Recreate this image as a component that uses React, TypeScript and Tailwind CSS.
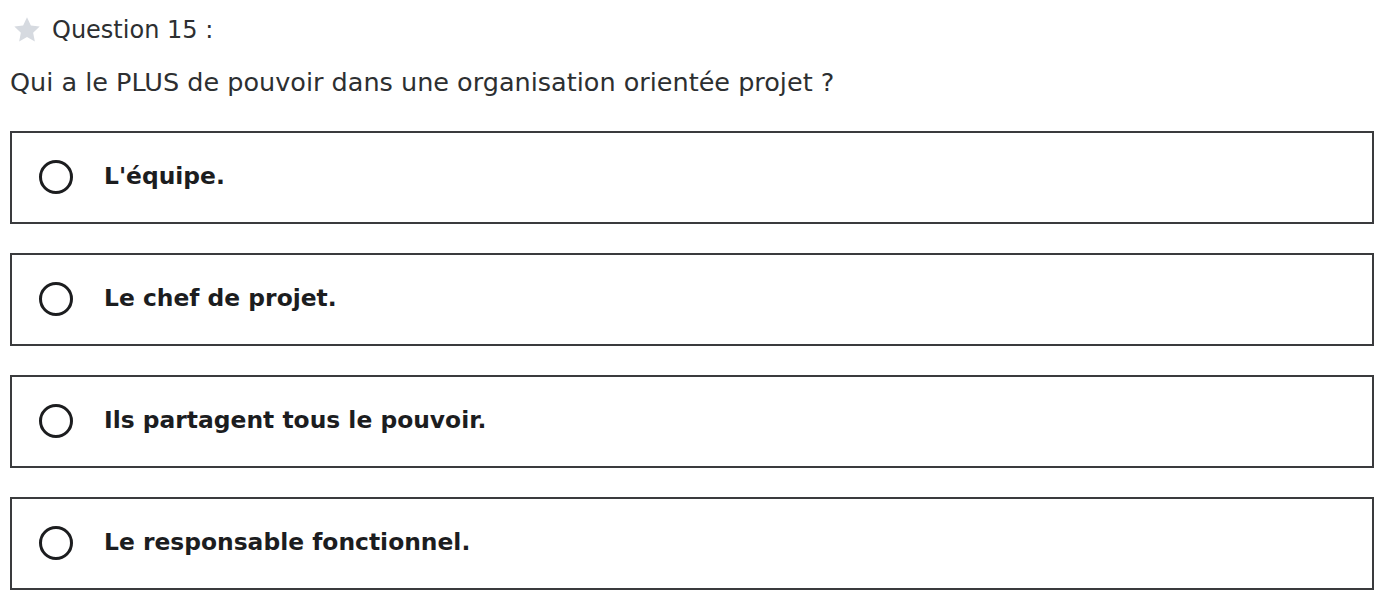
const options = [
  "L'équipe.",
  "Le chef de projet.",
  "Ils partagent tous le pouvoir.",
  "Le responsable fonctionnel.",
];

function Star() {
  return (
    <svg width="32" height="32" viewBox="0 0 24 24" className="shrink-0">
      <path
        d="M12 2.5l2.9 6.1 6.6.8-4.9 4.6 1.3 6.6L12 17.3l-5.9 3.3 1.3-6.6-4.9-4.6 6.6-.8z"
        fill="#d6dae0"
      />
    </svg>
  );
}

export default function App() {
  return (
    <div
      className="w-[1390px] h-[602px] bg-white text-[#2d2f31] overflow-hidden"
      style={{ fontFamily: "'DejaVu Sans', 'Noto Sans', sans-serif" }}
    >
      <div className="flex items-center gap-[9px] pl-[11px] pt-[14px] h-[46px]">
        <Star />
        <span className="text-[24px] leading-none">Question 15 :</span>
      </div>
      <p className="pl-[10px] mt-[24px] text-[25.5px] leading-none">
        Qui a le PLUS de pouvoir dans une organisation orientée projet ?
      </p>
      <div className="flex flex-col gap-[29px] ml-[10px] w-[1364px] mt-[35px]">
        {options.map((o, i) => (
          <div
            key={i}
            className="h-[93px] border-2 border-[#3a3b3d] flex items-center pl-[27px]"
          >
            <span className="w-[34px] h-[34px] rounded-full border-[3px] border-[#1c1d1f] shrink-0" />
            <span className="ml-[31px] text-[23.4px] font-bold text-[#1c1d1f]">
              {o}
            </span>
          </div>
        ))}
      </div>
    </div>
  );
}
